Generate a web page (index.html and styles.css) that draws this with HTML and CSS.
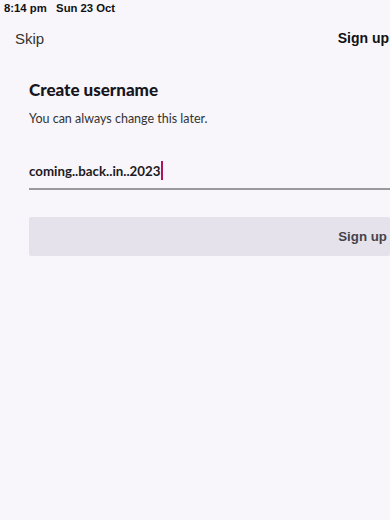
FILE: index.html
```html
<!DOCTYPE html>
<html>
<head>
<meta charset="utf-8">
<link rel="stylesheet" href="styles.css">
</head>
<body>
<div class="screen">
  <div class="status">8:14 pm&nbsp;&nbsp;&nbsp;Sun 23 Oct</div>
  <div class="nav">
    <span class="skip">Skip</span>
    <span class="signup-top">Sign up</span>
  </div>
  <div class="content">
    <h1 class="title">Create username</h1>
    <p class="subtitle">You can always change this later.</p>
    <div class="field">
      <span class="value">coming..back..in..2023</span><span class="caret"></span>
    </div>
    <div class="button"><span class="button-label">Sign up</span></div>
  </div>
</div>
</body>
</html>
```
FILE: styles.css
```css
html, body {
  margin: 0;
  padding: 0;
  overflow: hidden;
}
body {
  background: #f8f6fb;
  font-family: Lato, "Liberation Sans", sans-serif;
  color: #1c1a22;
  width: 390px;
  height: 520px;
}
.screen {
  width: 390px;
  height: 520px;
  overflow: hidden;
}
.status {
  padding: 2px 0 0 4px;
  height: 16px;
  font-size: 11.3px;
  font-weight: 700;
  color: #111;
  font-family: "Liberation Sans", sans-serif;
}
.nav {
  display: flex;
  justify-content: space-between;
  align-items: center;
  height: 40px;
  padding: 0 1px 0 15px;
}
.skip {
  font-size: 15px;
  color: #333;
  font-family: "Liberation Sans", sans-serif;
}
.signup-top {
  font-size: 14px;
  font-weight: 700;
  color: #111;
  font-family: "Liberation Sans", sans-serif;
}
.content {
  padding: 19px 0 0 29px;
}
.title {
  margin: 0;
  font-size: 17px;
  font-weight: 900;
  color: #17151d;
  line-height: 26px;
}
.subtitle {
  margin: 8px 0 0;
  font-size: 12.5px;
  color: #333;
  line-height: 16px;
}
.field {
  margin-top: 29px;
  display: flex;
  align-items: center;
  height: 29px;
  border-bottom: 2px solid #9a9a9e;
  padding-bottom: 3px;
}
.value {
  font-size: 13.3px;
  font-weight: 700;
  color: #1c1a22;
}
.caret {
  width: 2px;
  height: 19px;
  background: #b0145e;
  margin-left: 1px;
}
.button {
  margin-top: 27px;
  height: 39px;
  background: #e5e2eb;
  border-radius: 2px;
  display: flex;
  align-items: center;
  justify-content: flex-end;
}
.button-label {
  font-size: 13.3px;
  font-weight: 700;
  color: #45434b;
  margin-right: 3px;
  font-family: "Liberation Sans", sans-serif;
}
```
